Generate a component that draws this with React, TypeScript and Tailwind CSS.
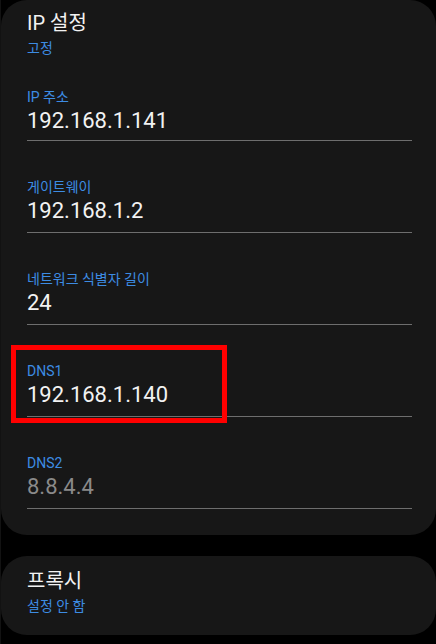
import React from "react";

const font = { fontFamily: "Roboto, 'Noto Sans CJK KR', sans-serif" };

type Field = { label: string; value: string; muted?: boolean; first?: boolean };

const fields: Field[] = [
  { label: "IP 주소", value: "192.168.1.141", first: true },
  { label: "게이트웨이", value: "192.168.1.2" },
  { label: "네트워크 식별자 길이", value: "24" },
  { label: "DNS1", value: "192.168.1.140" },
  { label: "DNS2", value: "8.8.4.4", muted: true },
];

function FieldRow({ f }: { f: Field }) {
  return (
    <div className={`${f.first ? "pt-[30px] pb-[4px]" : "pt-[37px] pb-[6px]"} border-b border-[#6e6e6e]`}>
      <div className="text-[14px] leading-[18px] text-[#3d8ce3]">{f.label}</div>
      <div className={`text-[22px] leading-[30px] ${f.muted ? "text-[#8a8a8a]" : "text-[#f2f2f2]"}`}>
        {f.value}
      </div>
    </div>
  );
}

export default function App() {
  return (
    <div className="relative w-[436px] h-[644px] bg-black overflow-hidden flex" style={font}>
      <div className="w-px h-full bg-[#121212]" />
      <div className="flex-1 flex flex-col">
        <div className="bg-[#171717] rounded-[26px] pl-[26px] pr-[24px] pt-[10px] pb-[26px]">
          <div className="text-[20px] leading-[26px] text-[#f2f2f2]">IP 설정</div>
          <div className="mt-[2px] text-[14px] leading-[20px] text-[#3d8ce3]">고정</div>
          {fields.map((f) => (
            <FieldRow key={f.label} f={f} />
          ))}
        </div>
        <div className="mt-[21px] bg-[#171717] rounded-[26px] pl-[26px] pr-[24px] pt-[12px] pb-[19px]">
          <div className="text-[20px] leading-[26px] text-[#f2f2f2]">프록시</div>
          <div className="mt-[2px] text-[14px] leading-[20px] text-[#3d8ce3]">설정 안 함</div>
        </div>
      </div>
      <div className="absolute left-[11px] top-[345px] w-[216px] h-[78px] border-[5px] border-[#ff0000]" />
    </div>
  );
}
